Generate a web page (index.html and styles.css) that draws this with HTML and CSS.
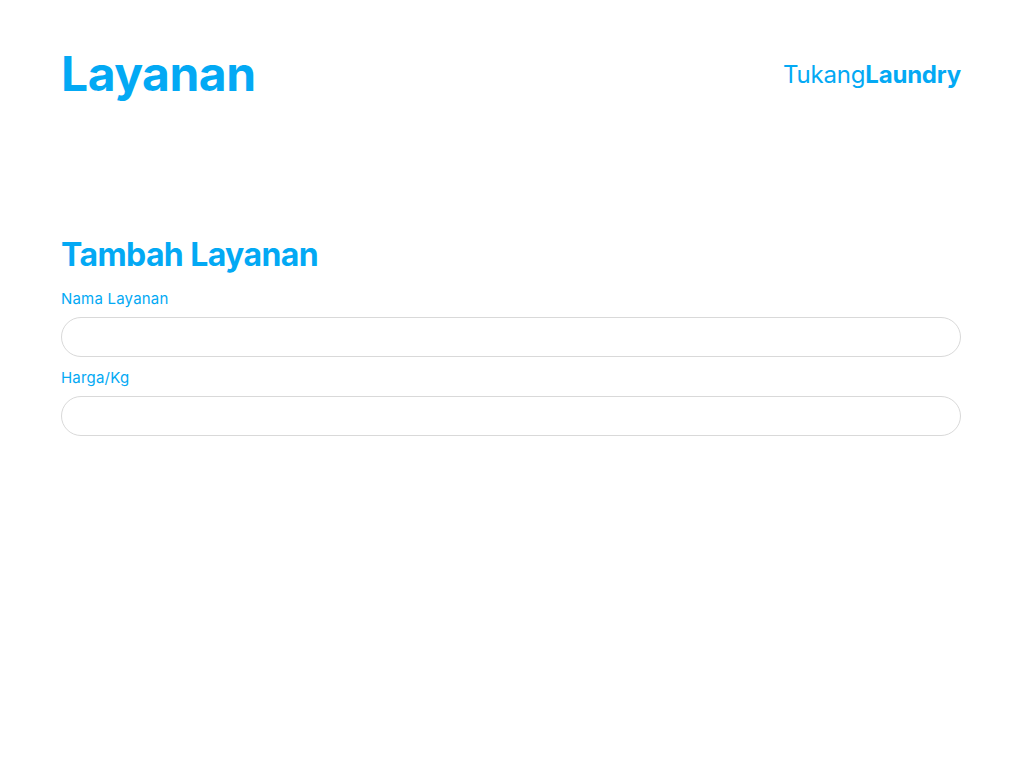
FILE: index.html
```html
<!DOCTYPE html>
<html lang="id">
<head>
<meta charset="utf-8">
<title>Layanan</title>
<link rel="stylesheet" href="styles.css">
</head>
<body>
<div class="page">
  <header class="header">
    <h1 class="title">Layanan</h1>
    <div class="brand">Tukang<b>Laundry</b></div>
  </header>
  <section class="form-section">
    <h2 class="subtitle">Tambah Layanan</h2>
    <form class="form">
      <label class="field">
        <span class="label">Nama Layanan</span>
        <input class="input" type="text">
      </label>
      <label class="field">
        <span class="label">Harga/Kg</span>
        <input class="input" type="text">
      </label>
    </form>
  </section>
</div>
</body>
</html>
```

FILE: styles.css
```css
* { box-sizing: border-box; }
html, body { margin: 0; padding: 0; background: #fff; }
body { font-family: Inter, "Noto Sans", sans-serif; color: #03a9f4; }
.page { padding: 44px 63px 0 61px; }
.header { display: flex; justify-content: space-between; align-items: center; height: 60px; }
.title { margin: 0; font-size: 48px; font-weight: 700; letter-spacing: -0.5px; line-height: 60px; }
.brand { font-size: 24px; font-weight: 400; letter-spacing: -0.2px; }
.brand b { font-weight: 700; }
.form-section { margin-top: 131px; }
.subtitle { margin: 0; font-size: 32px; font-weight: 700; letter-spacing: -0.6px; line-height: 40px; }
.form { display: flex; flex-direction: column; gap: 11px; margin-top: 14px; }
.field { display: flex; flex-direction: column; gap: 8px; }
.label { font-size: 15px; line-height: 20px; font-weight: 400; letter-spacing: 0.2px; }
.input { width: 100%; height: 40px; border: 1px solid #d9d9d9; border-radius: 20px; background: #fff; padding: 0 18px; font: inherit; outline: none; }
```
